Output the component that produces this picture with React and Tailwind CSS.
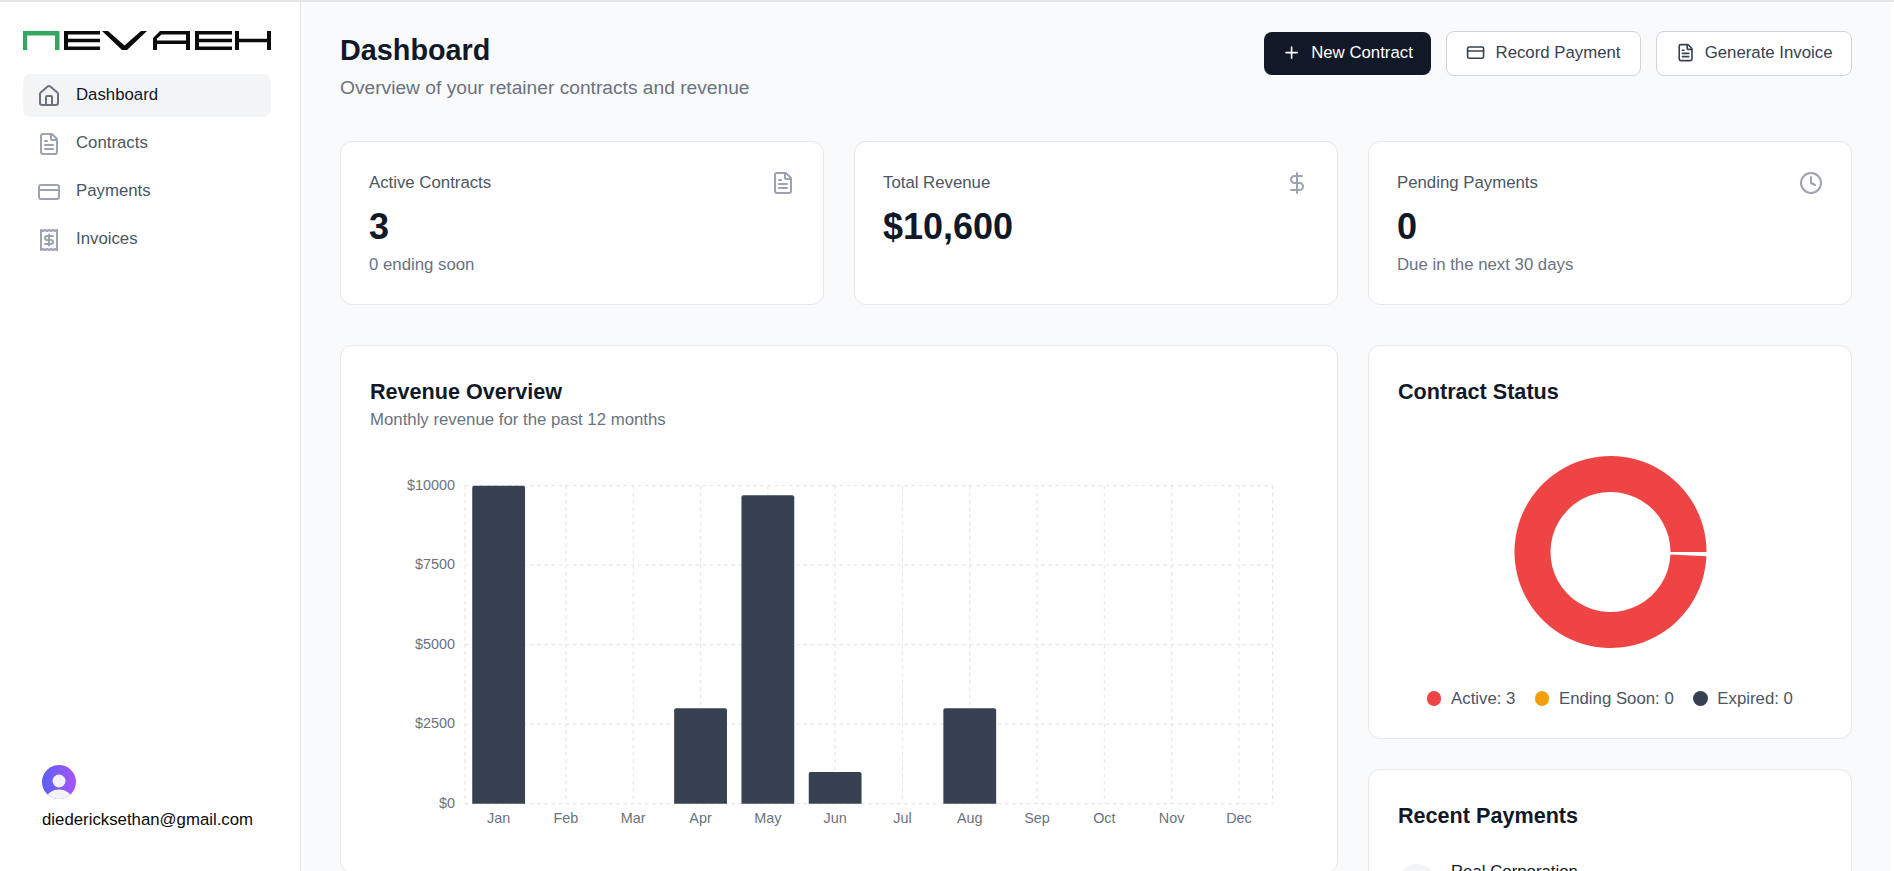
import React from "react";
import { House, FileText, CreditCard, Receipt, DollarSign, Clock, Plus } from "lucide-react";

const navItems = [
  { label: "Dashboard", icon: House, active: true },
  { label: "Contracts", icon: FileText },
  { label: "Payments", icon: CreditCard },
  { label: "Invoices", icon: Receipt },
];

const stats = [
  { label: "Active Contracts", value: "3", sub: "0 ending soon", icon: FileText },
  { label: "Total Revenue", value: "$10,600", icon: DollarSign },
  { label: "Pending Payments", value: "0", sub: "Due in the next 30 days", icon: Clock },
];

const revenue = [
  ["Jan", 10000], ["Feb", 0], ["Mar", 0], ["Apr", 3000], ["May", 9700], ["Jun", 1000],
  ["Jul", 0], ["Aug", 3000], ["Sep", 0], ["Oct", 0], ["Nov", 0], ["Dec", 0],
];

const legend = [
  { label: "Active: 3", color: "bg-[#ef4444]" },
  { label: "Ending Soon: 0", color: "bg-[#f59e0b]" },
  { label: "Expired: 0", color: "bg-[#374151]" },
];

function Logo() {
  return (
    <svg width="248" height="19" viewBox="0 0 248 19" className="block">
      <path d="M0 19V0h36.5v19h-4.5V4.5H4.2V19z" fill="#34a860" />
      <g fill="#0b0b0b">
        {/* E */}
        <path d="M41 0h36v3.500H45v4.200H77v3.500H45v4.300H77V19H41z" />
        {/* V */}
        <path d="M79 0h6l16.500 14.500L118 0h6l-20 19h-5z" />
        {/* A */}
        <path d="M130 19V7l7-7h30v19h-4v-6H134v6zM134 9.500h29v-6h-24.500l-4.500 4z" />
        {/* E */}
        <path d="M172 0h37v3.500h-33v4.200H209v3.500h-33v4.300H209V19h-37z" />
        {/* H */}
        <path d="M212 0h4v7.700H244V0h4v19h-4v-7.800H216V19h-4z" />
      </g>
    </svg>
  );
}

function Avatar() {
  return (
    <svg width="34" height="34" viewBox="0 0 34 34" className="block">
      <defs>
        <linearGradient id="avatarBg" x1="0" y1="0" x2="1" y2="0">
          <stop offset="0" stopColor="#5a60f5" />
          <stop offset="1" stopColor="#a855f7" />
        </linearGradient>
        <clipPath id="avatarClip">
          <circle cx="17" cy="17" r="17" />
        </clipPath>
      </defs>
      <g clipPath="url(#avatarClip)">
        <rect width="34" height="34" fill="url(#avatarBg)" />
        <circle cx="17" cy="16" r="6.500" fill="#f4f1fb" />
        <ellipse cx="17" cy="33" rx="12" ry="8.500" fill="#f3f3f6" />
      </g>
    </svg>
  );
}

function RevenueChart() {
  const left = 95;
  const band = 67.3;
  const top = 20.7;
  const bottom = 338.7;
  const plotH = bottom - top;
  const right = left + band * 12;
  const ticks = ["$10000", "$7500", "$5000", "$2500", "$0"];

  return (
    <svg width="938" height="380" viewBox="0 0 938 380" className="block mt-[33.5px]">
      {/* grid */}
      <g stroke="#e5e7eb" strokeWidth="1.2" strokeDasharray="3.6 3.6">
        {ticks.map((t, i) => (
          <line key={t} x1={left} x2={right} y1={top + (plotH / 4) * i} y2={top + (plotH / 4) * i} />
        ))}
        <line x1={left} x2={left} y1={top} y2={bottom} />
        <line x1={right} x2={right} y1={top} y2={bottom} />
        {revenue.map(([m], i) => (
          <line key={m} x1={left + band * (i + 0.5)} x2={left + band * (i + 0.5)} y1={top} y2={bottom} />
        ))}
      </g>

      {revenue.map(([m, v], i) => {
        if (!v) return null;
        const h = (v / 10000) * plotH;
        const x = left + band * (i + 0.5) - 26.4;
        const y = bottom - h;
        return (
          <path
            key={m}
            d={`M${x} ${bottom}V${y + 2}q0-2 2-2h48.800q2 0 2 2V${bottom}z`}
            fill="#374151"
          />
        );
      })}

      <g fill="#6b7280" fontSize="14.400">
        {ticks.map((t, i) => (
          <text key={t} x="85" y={top + (plotH / 4) * i + 4} textAnchor="end">{t}</text>
        ))}
        {revenue.map(([m], i) => (
          <text key={m} x={left + band * (i + 0.5)} y="358" textAnchor="middle">{m}</text>
        ))}
      </g>
    </svg>
  );
}

function Donut() {
  // one 3-count slice, the two empty ones only leave the small gap at 3 o'clock
  const cx = 212.5;
  const cy = 120;
  const R = 96;
  const r = 60;
  const gap = (2.5 * Math.PI) / 180;
  const d = [
    `M${cx + R} ${cy}`,
    `A${R} ${R} 0 1 0 ${cx + R * Math.cos(gap)} ${cy + R * Math.sin(gap)}`,
    `L${cx + r * Math.cos(gap)} ${cy + r * Math.sin(gap)}`,
    `A${r} ${r} 0 1 1 ${cx + r} ${cy}`,
    "Z",
  ].join(" ");
  return (
    <svg width="424" height="240" viewBox="0 0 424 240" className="block mt-[25.5px]">
      <path d={d} fill="#ef4444" />
    </svg>
  );
}

export default function App() {
  return (
    <div className="h-screen overflow-hidden flex bg-white border-t-2 border-[#e5e5e5] pr-[3px] font-['Liberation_Sans',Arial,sans-serif]">
      {/* Sidebar */}
      <aside className="w-[301px] shrink-0 border-r border-[#e5e7eb] bg-white flex flex-col justify-between pt-[29px] pb-[39px]">
        <div className="pl-[23px]">
          <Logo />
          <nav className="mt-[24px] w-[248px] flex flex-col gap-[5px]">
            {navItems.map((item) => (
              <div
                key={item.label}
                className={`h-[43px] flex items-center gap-[15px] pl-[14px] rounded-lg text-[16.8px] ${
                  item.active ? "bg-[#f3f4f6] text-[#111827]" : "text-[#4b5563]"
                }`}
              >
                <item.icon size={24} strokeWidth={2} className={item.active ? "text-[#6b7280]" : "text-[#9ca3af]"} />
                <span className="-mt-px">{item.label}</span>
              </div>
            ))}
          </nav>
        </div>
        <div className="pl-[42px]">
          <Avatar />
          <div className="mt-[9px] text-[16.8px] leading-[24px] text-[#0a0a0a]">diedericksethan@gmail.com</div>
        </div>
      </aside>

      {/* Main */}
      <main className="flex-1 min-w-0 overflow-hidden bg-[#f9fafb] pt-[29px] px-[39px]">
        <div className="flex items-start justify-between">
          <div>
            <h1 className="text-[28.8px] leading-[38px] font-bold text-[#111827]">Dashboard</h1>
            <p className="mt-[4.5px] mb-[-0.5px] text-[19.2px] leading-[28px] text-[#6b7280]">Overview of your retainer contracts and revenue</p>
          </div>
          <div className="flex items-center gap-[15.5px]">
            <button className="h-[43px] flex items-center gap-[10px] px-[18px] pb-px rounded-lg bg-[#111827] text-white text-[16.8px]">
              <Plus size={19.2} />
              New Contract
            </button>
            <button className="h-[45px] flex items-center gap-[10px] px-[19px] pb-px rounded-lg border border-[#d1d5db] bg-white text-[#374151] text-[16.8px]">
              <CreditCard size={19.2} />
              Record Payment
            </button>
            <button className="h-[45px] flex items-center gap-[10px] px-[18.5px] pb-px rounded-lg border border-[#d1d5db] bg-white text-[#374151] text-[16.8px]">
              <FileText size={19.2} />
              Generate Invoice
            </button>
          </div>
        </div>

        {/* Stat cards */}
        <div className="mt-[40px] grid grid-cols-3 gap-[30px]">
          {stats.map((s) => (
            <div key={s.label} className="h-[164px] bg-white rounded-xl border border-[#e5e7eb] px-[28px] pt-[28.5px]">
              <div className="flex items-center justify-between h-[24px]">
                <span className="text-[16.8px] text-[#4b5563]">{s.label}</span>
                <s.icon size={24} className="text-[#9ca3af]" />
              </div>
              <div className="mt-[10.5px] text-[36px] leading-[44px] font-bold text-[#111827]">{s.value}</div>
              {s.sub && <div className="mt-[3.5px] text-[16.8px] leading-[24px] text-[#6b7280]">{s.sub}</div>}
            </div>
          ))}
        </div>

        <div className="mt-[40px] grid grid-cols-[998px_484px] gap-[30px]">
          {/* Revenue */}
          <div className="h-[528px] bg-white rounded-xl border border-[#e5e7eb] px-[29px] pt-[29.5px]">
            <h2 className="text-[21.6px] leading-[31px] font-bold text-[#111827]">Revenue Overview</h2>
            <p className="mt-px text-[16.8px] leading-[24px] text-[#6b7280]">Monthly revenue for the past 12 months</p>
            <RevenueChart />
          </div>

          <div className="flex flex-col gap-[30px]">
            {/* Contract status */}
            <div className="h-[394px] bg-white rounded-xl border border-[#e5e7eb] px-[29px] pt-[29.5px]">
              <h2 className="text-[21.6px] leading-[31px] font-bold text-[#111827]">Contract Status</h2>
              <Donut />
              <div className="mt-[14.5px] flex items-center justify-center gap-[19.6px]">
                {legend.map((l) => (
                  <div key={l.label} className="flex items-center gap-[9.6px]">
                    <span className={`w-[14.4px] h-[14.4px] rounded-full ${l.color}`} />
                    <span className="text-[16.8px] leading-[24px] text-[#4b5563]">{l.label}</span>
                  </div>
                ))}
              </div>
            </div>

            {/* Recent payments */}
            <div className="bg-white rounded-xl border border-[#e5e7eb] px-[29px] pt-[29.5px] pb-[29px]">
              <h2 className="text-[21.6px] leading-[31px] font-bold text-[#111827]">Recent Payments</h2>
              <div className="mt-[29.5px] flex items-start gap-[15px]">
                <div className="mt-[4px] w-[38px] h-[38px] rounded-full bg-[#f3f4f6]" />
                <div className="text-[16.8px] leading-[24px] text-[#111827]">Real Corporation</div>
              </div>
            </div>
          </div>
        </div>
      </main>
    </div>
  );
}
